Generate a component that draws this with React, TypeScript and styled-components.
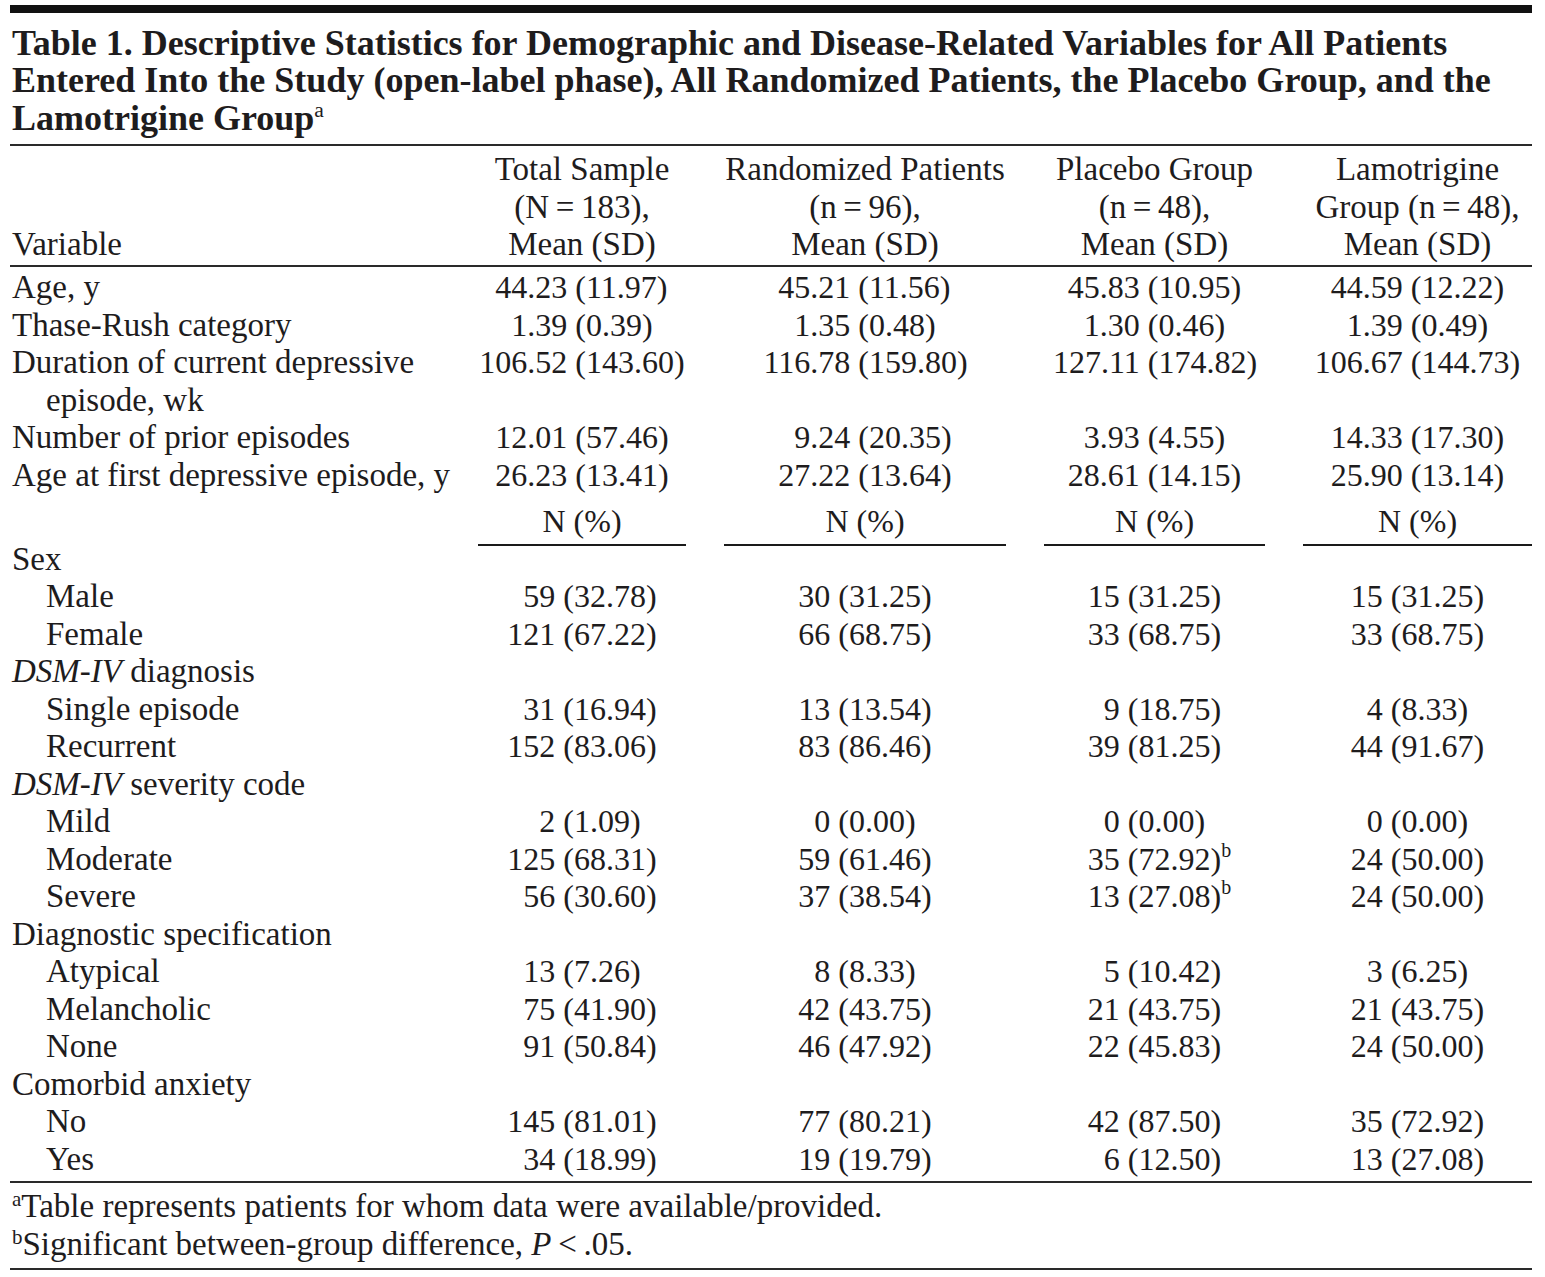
import React from "react";
import styled, { createGlobalStyle } from "styled-components";

const GlobalStyle = createGlobalStyle`
  html, body {
    margin: 0;
    padding: 0;
    background: #ffffff;
  }
`;

const COLS = "430px 208px 282px 221px 229px";
const INK = "#1e1c1d";

const Page = styled.div`
  width: 1522px;
  padding: 5px 13px 0 10px;
  font-family: "Liberation Serif", "Times New Roman", serif;
  font-size: 33px;
  color: ${INK};
`;

const TopBar = styled.div`
  height: 8px;
  background: #111;
`;

const Title = styled.h1`
  margin: 11.5px 0 7px 2px;
  font-size: 36px;
  font-weight: bold;
  line-height: 37.5px;
  white-space: nowrap;
`;

const Rule = styled.div`
  height: 2px;
  background: #2a2a2a;
`;

const Sup = styled.sup`
  font-size: 0.6em;
  line-height: 0;
  vertical-align: 0.6em;
  font-weight: normal;
`;

const Head = styled.div`
  display: grid;
  grid-template-columns: ${COLS};
  column-gap: 38px;
  align-items: end;
  padding: 5px 0 1.5px;
  line-height: 37.5px;
`;

const HeadLabel = styled.div`
  padding-left: 2px;
`;

const HeadCell = styled.div`
  text-align: center;
  white-space: nowrap;
`;

const Body = styled.div`
  padding: 2px 0 3px;
`;

const Row = styled.div`
  display: grid;
  grid-template-columns: ${COLS};
  column-gap: 38px;
  line-height: 37.5px;
`;

const Label = styled.div<{ $indent?: boolean }>`
  padding-left: 36px;
  text-indent: ${(p) => (p.$indent ? 0 : -34)}px;
  white-space: nowrap;
`;

const Value = styled.div`
  display: flex;
  justify-content: center;
  white-space: nowrap;
  font-size: 32px;
`;

const Lead = styled.span<{ $w: number }>`
  display: inline-block;
  min-width: ${(p) => p.$w}em;
  text-align: right;
`;

const Tail = styled.span<{ $w: number }>`
  position: relative;
  display: inline-block;
  min-width: ${(p) => p.$w}em;
  margin-left: 0.25em;
  text-align: left;
`;

const TailSup = styled.span`
  position: absolute;
  left: 100%;
  top: -9px;
  font-size: 20px;
`;

const UnitRow = styled(Row)`
  padding-top: 9px;
  margin-bottom: -5px;
`;

const UnitCell = styled.div`
  text-align: center;
  font-size: 32px;
  padding-bottom: 3px;
  border-bottom: 2px solid #1a1a1a;
`;

const Notes = styled.div`
  margin-top: 5px;
  padding: 0 0 4.5px 2px;
  line-height: 37.5px;
`;

const NoteSup = styled.span`
  font-size: 21px;
  vertical-align: 11px;
  line-height: 0;
`;

type MeanRow = { label: React.ReactNode; values: string[] };

const meanRows: MeanRow[] = [
  { label: "Age, y", values: ["44.23 (11.97)", "45.21 (11.56)", "45.83 (10.95)", "44.59 (12.22)"] },
  { label: "Thase-Rush category", values: ["1.39 (0.39)", "1.35 (0.48)", "1.30 (0.46)", "1.39 (0.49)"] },
  {
    label: (
      <>
        Duration of current depressive
        <br />
        episode, wk
      </>
    ),
    values: ["106.52 (143.60)", "116.78 (159.80)", "127.11 (174.82)", "106.67 (144.73)"],
  },
  { label: "Number of prior episodes", values: ["12.01 (57.46)", "9.24 (20.35)", "3.93 (4.55)", "14.33 (17.30)"] },
  {
    label: "Age at first depressive episode, y",
    values: ["26.23 (13.41)", "27.22 (13.64)", "28.61 (14.15)", "25.90 (13.14)"],
  },
];

type CountRow = { label: React.ReactNode; group?: boolean; values?: string[] };

const countRows: CountRow[] = [
  { label: "Sex", group: true },
  { label: "Male", values: ["59 (32.78)", "30 (31.25)", "15 (31.25)", "15 (31.25)"] },
  { label: "Female", values: ["121 (67.22)", "66 (68.75)", "33 (68.75)", "33 (68.75)"] },
  { label: <><i>DSM-IV</i> diagnosis</>, group: true },
  { label: "Single episode", values: ["31 (16.94)", "13 (13.54)", "9 (18.75)", "4 (8.33)"] },
  { label: "Recurrent", values: ["152 (83.06)", "83 (86.46)", "39 (81.25)", "44 (91.67)"] },
  { label: <><i>DSM-IV</i> severity code</>, group: true },
  { label: "Mild", values: ["2 (1.09)", "0 (0.00)", "0 (0.00)", "0 (0.00)"] },
  { label: "Moderate", values: ["125 (68.31)", "59 (61.46)", "35 (72.92)^", "24 (50.00)"] },
  { label: "Severe", values: ["56 (30.60)", "37 (38.54)", "13 (27.08)^", "24 (50.00)"] },
  { label: "Diagnostic specification", group: true },
  { label: "Atypical", values: ["13 (7.26)", "8 (8.33)", "5 (10.42)", "3 (6.25)"] },
  { label: "Melancholic", values: ["75 (41.90)", "42 (43.75)", "21 (43.75)", "21 (43.75)"] },
  { label: "None", values: ["91 (50.84)", "46 (47.92)", "22 (45.83)", "24 (50.00)"] },
  { label: "Comorbid anxiety", group: true },
  { label: "No", values: ["145 (81.01)", "77 (80.21)", "42 (87.50)", "35 (72.92)"] },
  { label: "Yes", values: ["34 (18.99)", "19 (19.79)", "6 (12.50)", "13 (27.08)"] },
];

const countLead = [1.5, 1, 1, 1];

function Pair({ text, lead, tail }: { text: string; lead: number; tail: number }) {
  const marked = text.endsWith("^");
  const [a, b] = text.replace("^", "").split(" ");
  return (
    <Value>
      <Lead $w={lead}>{a}</Lead>
      <Tail $w={tail}>
        {b}
        {marked && <TailSup>b</TailSup>}
      </Tail>
    </Value>
  );
}

export default function App() {
  return (
    <>
      <GlobalStyle />
      <Page>
        <TopBar />
        <Title>
          Table 1. Descriptive Statistics for Demographic and Disease-Related Variables for All Patients
          <br />
          Entered Into the Study (open-label phase), All Randomized Patients, the Placebo Group, and the
          <br />
          Lamotrigine Group<Sup>a</Sup>
        </Title>
        <Rule />
        <Head>
          <HeadLabel>Variable</HeadLabel>
          <HeadCell>
            Total Sample
            <br />
            (N{"\u2009"}={"\u2009"}183),
            <br />
            Mean (SD)
          </HeadCell>
          <HeadCell>
            Randomized Patients
            <br />
            (n{"\u2009"}={"\u2009"}96),
            <br />
            Mean (SD)
          </HeadCell>
          <HeadCell>
            Placebo Group
            <br />
            (n{"\u2009"}={"\u2009"}48),
            <br />
            Mean (SD)
          </HeadCell>
          <HeadCell>
            Lamotrigine
            <br />
            Group (n{"\u2009"}={"\u2009"}48),
            <br />
            Mean (SD)
          </HeadCell>
        </Head>
        <Rule />
        <Body>
          {meanRows.map((r, k) => (
            <Row key={k}>
              <Label>{r.label}</Label>
              {r.values.map((v, i) => (
                <Pair key={i} text={v} lead={2.75} tail={3.417} />
              ))}
            </Row>
          ))}
          <UnitRow>
            <div />
            {[0, 1, 2, 3].map((i) => (
              <UnitCell key={i}>N (%)</UnitCell>
            ))}
          </UnitRow>
          {countRows.map((r, k) => (
            <Row key={k}>
              <Label $indent={!r.group}>{r.label}</Label>
              {r.values
                ? r.values.map((v, i) => <Pair key={i} text={v} lead={countLead[i]} tail={2.917} />)
                : null}
            </Row>
          ))}
        </Body>
        <Rule />
        <Notes>
          <div>
            <NoteSup>a</NoteSup>Table represents patients for whom data were available/provided.
          </div>
          <div>
            <NoteSup>b</NoteSup>Significant between-group difference, <i>P</i>
            {"\u2009"}&lt;{"\u2009"}.05.
          </div>
        </Notes>
        <Rule />
      </Page>
    </>
  );
}
